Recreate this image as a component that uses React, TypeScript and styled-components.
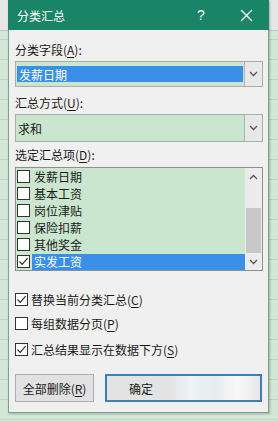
import React from "react";
import styled, { createGlobalStyle } from "styled-components";

const Global = createGlobalStyle`
  html, body { margin: 0; padding: 0; }
  body {
    width: 278px;
    height: 421px;
    overflow: hidden;
    font-family: "Noto Sans CJK SC", "Noto Sans", sans-serif;
  }
`;

const Page = styled.div`
  width: 278px;
  height: 421px;
  box-sizing: border-box;
  padding-left: 8px;
  background:
    linear-gradient(to bottom, #e6e6e6 0, #e6e6e6 30px, #b9c9bd 30px, #b9c9bd 31px, transparent 31px),
    repeating-linear-gradient(to bottom, transparent 0, transparent 19px, #bcd4c1 19px, #bcd4c1 20px),
    #d2e7d6;
`;

const Dialog = styled.div`
  width: 261px;
  height: 413px;
  box-sizing: border-box;
  background: #f0f0f0;
  border: 1px solid #7f9f90;
  border-top: none;
  box-shadow: 1px 1px 2px rgba(0, 0, 0, 0.25);
  display: flex;
  flex-direction: column;
`;

const TitleBar = styled.div`
  height: 30px;
  margin: 0 -1px;
  background: #1a8466;
  color: #ffffff;
  display: flex;
  align-items: center;
  font-size: 12px;
`;

const TitleText = styled.div`
  flex: 1;
  padding-left: 9px;
  letter-spacing: 0;
`;

const TitleButton = styled.div<{ $w: number }>`
  width: ${(p) => p.$w}px;
  height: 30px;
  display: flex;
  align-items: center;
  justify-content: center;
  font-family: "Liberation Sans", sans-serif;
  font-size: 14px;
`;

const Body = styled.div`
  flex: 1;
  display: flex;
  flex-direction: column;
  padding: 0 5px 0 6px;
  color: #1a1a1a;
  font-size: 12px;
`;

const Label = styled.div<{ $mt: number }>`
  margin-top: ${(p) => p.$mt}px;
  height: 16px;
  line-height: 16px;
  white-space: nowrap;
  u { text-decoration: underline; text-underline-offset: 2px; }
`;

const Select = styled.div<{ $h: number; $mt: number }>`
  margin-top: ${(p) => p.$mt}px;
  height: ${(p) => p.$h}px;
  box-sizing: border-box;
  border: 1px solid #a6b0a8;
  background: #cbe6cf;
  display: flex;
  align-items: stretch;
`;

const SelectValue = styled.div<{ $selected?: boolean }>`
  flex: 1;
  margin: ${(p) => (p.$selected ? "4px 1px 4px 1px" : "0")};
  padding-left: ${(p) => (p.$selected ? "2px" : "2px")};
  display: flex;
  align-items: center;
  background: ${(p) => (p.$selected ? "#3a8fe8" : "transparent")};
  color: ${(p) => (p.$selected ? "#ffffff" : "#1a1a1a")};
  font-size: 12px;
`;

const SelectArrow = styled.div`
  width: 17px;
  border-left: 1px solid #b4b4b4;
  background: #e8e8e8;
  display: flex;
  align-items: center;
  justify-content: center;
`;

const ListBox = styled.div`
  margin-top: 4px;
  height: 104px;
  box-sizing: border-box;
  border: 1px solid #8e8e8e;
  background: #cbe6cf;
  display: flex;
`;

const Items = styled.div`
  flex: 1;
  display: flex;
  flex-direction: column;
`;

const Item = styled.div`
  height: 17px;
  display: flex;
  align-items: center;
  padding-left: 1px;
`;

const ItemText = styled.div<{ $selected?: boolean }>`
  flex: 1;
  height: 16px;
  margin-left: 2px;
  padding-left: 2px;
  line-height: 16px;
  background: ${(p) => (p.$selected ? "#3a8fe8" : "transparent")};
  color: ${(p) => (p.$selected ? "#ffffff" : "#1a1a1a")};
`;

const Box = styled.div`
  width: 13px;
  height: 13px;
  box-sizing: border-box;
  border: 1px solid #333333;
  background: #ffffff;
  display: flex;
  align-items: center;
  justify-content: center;
  flex-shrink: 0;
`;

const ScrollBar = styled.div`
  width: 17px;
  background: #ececec;
  display: flex;
  flex-direction: column;
  align-items: center;
`;

const ScrollArrow = styled.div`
  height: 17px;
  width: 17px;
  display: flex;
  align-items: center;
  justify-content: center;
`;

const Track = styled.div`
  flex: 1;
  width: 15px;
  display: flex;
  flex-direction: column;
  justify-content: flex-end;
  padding-bottom: 0px;
`;

const Thumb = styled.div`
  height: 45px;
  background: #c8c8c8;
`;

const CheckRow = styled.div<{ $mt: number }>`
  margin-top: ${(p) => p.$mt}px;
  height: 16px;
  display: flex;
  align-items: center;
  gap: 3px;
  white-space: nowrap;
  u { text-decoration: underline; text-underline-offset: 2px; }
`;

const Buttons = styled.div`
  margin-top: 17px;
  display: flex;
  gap: 11px;
`;

const Button = styled.div<{ $primary?: boolean; $w?: number }>`
  height: 28px;
  box-sizing: border-box;
  width: ${(p) => (p.$w ? `${p.$w}px` : "auto")};
  flex: ${(p) => (p.$w ? "none" : "1")};
  margin-right: ${(p) => (p.$primary ? "1px" : "0")};
  border: ${(p) => (p.$primary ? "2px solid #3b7fb5" : "1px solid #adadad")};
  background: ${(p) =>
    p.$primary
      ? "linear-gradient(to right, #e3e3e3 0, #e3e3e3 40%, #eef3f5 55%, #e6ebee 70%, #f8f8f8 85%, #e8e8e8 100%)"
      : "#e1e1e1"};
  display: flex;
  align-items: center;
  justify-content: ${(p) => (p.$primary ? "flex-start" : "center")};
  padding-left: ${(p) => (p.$primary ? "22px" : "0")};
  font-size: 12px;
  color: #1a1a1a;
  u { text-decoration: underline; text-underline-offset: 2px; }
`;

const Check = () => (
  <svg width="11" height="11" viewBox="0 0 11 11">
    <path d="M1.5 5.5 L4.2 8.3 L9.6 2.2" fill="none" stroke="#333" strokeWidth="1.2" />
  </svg>
);

const Chevron = ({ up }: { up?: boolean }) => (
  <svg width="9" height="6" viewBox="0 0 9 6">
    <path
      d={up ? "M1 5 L4.5 1.5 L8 5" : "M1 1 L4.5 4.5 L8 1"}
      fill="none"
      stroke="#555"
      strokeWidth="1.3"
    />
  </svg>
);

const CloseIcon = () => (
  <svg width="13" height="13" viewBox="0 0 13 13">
    <path d="M1 1 L12 12 M12 1 L1 12" stroke="#fff" strokeWidth="1.3" />
  </svg>
);

const items = ["发薪日期", "基本工资", "岗位津贴", "保险扣薪", "其他奖金", "实发工资"];

export default function App() {
  return (
    <>
      <Global />
      <Page>
        <Dialog>
          <TitleBar>
            <TitleText>分类汇总</TitleText>
            <TitleButton $w={44}>?</TitleButton>
            <TitleButton $w={46}>
              <CloseIcon />
            </TitleButton>
          </TitleBar>
          <Body>
            <Label $mt={12}>
              分类字段(<u>A</u>):
            </Label>
            <Select $h={26} $mt={3}>
              <SelectValue $selected>发薪日期</SelectValue>
              <SelectArrow>
                <Chevron />
              </SelectArrow>
            </Select>
            <Label $mt={8}>
              汇总方式(<u>U</u>):
            </Label>
            <Select $h={28} $mt={3}>
              <SelectValue>求和</SelectValue>
              <SelectArrow>
                <Chevron />
              </SelectArrow>
            </Select>
            <Label $mt={5}>
              选定汇总项(<u>D</u>):
            </Label>
            <ListBox>
              <Items>
                {items.map((t, i) => (
                  <Item key={t}>
                    <Box>{i === items.length - 1 ? <Check /> : null}</Box>
                    <ItemText $selected={i === items.length - 1}>{t}</ItemText>
                  </Item>
                ))}
              </Items>
              <ScrollBar>
                <ScrollArrow>
                  <Chevron up />
                </ScrollArrow>
                <Track>
                  <Thumb />
                </Track>
                <ScrollArrow>
                  <Chevron />
                </ScrollArrow>
              </ScrollBar>
            </ListBox>
            <CheckRow $mt={20}>
              <Box>
                <Check />
              </Box>
              <span>
                替换当前分类汇总(<u>C</u>)
              </span>
            </CheckRow>
            <CheckRow $mt={8}>
              <Box />
              <span>
                每组数据分页(<u>P</u>)
              </span>
            </CheckRow>
            <CheckRow $mt={10}>
              <Box>
                <Check />
              </Box>
              <span>
                汇总结果显示在数据下方(<u>S</u>)
              </span>
            </CheckRow>
            <Buttons>
              <Button $w={79}>
                <span>
                  全部删除(<u>R</u>)
                </span>
              </Button>
              <Button $primary>确定</Button>
            </Buttons>
          </Body>
        </Dialog>
      </Page>
    </>
  );
}
